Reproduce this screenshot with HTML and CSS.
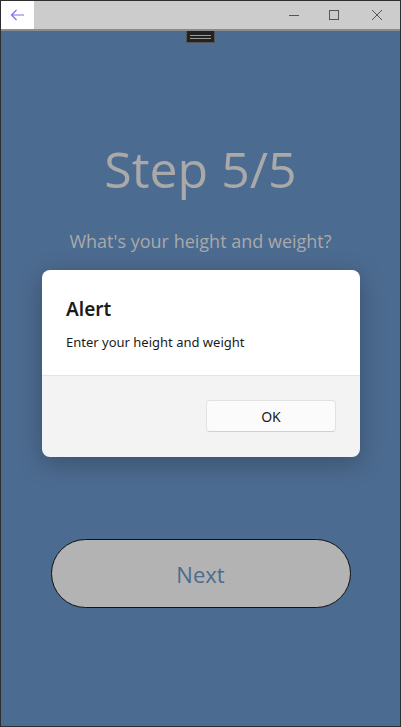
FILE: index.html
```html
<!DOCTYPE html>
<html>
<head>
<meta charset="utf-8">
<link rel="stylesheet" href="styles.css">
</head>
<body>
<div class="window">
  <div class="titlebar">
    <div class="back">
      <svg width="16" height="12" viewBox="0 0 16 12"><path d="M6.5 1 L1.5 6 L6.5 11 M1.5 6 H14" fill="none" stroke="#7b6cf0" stroke-width="1.2"/></svg>
    </div>
    <div class="spacer"></div>
    <div class="ctrl"><svg width="12" height="12" viewBox="0 0 12 12"><path d="M1 6.5 H11" stroke="#555" stroke-width="1"/></svg></div>
    <div class="ctrl"><svg width="12" height="12" viewBox="0 0 12 12"><rect x="1.5" y="1.5" width="9" height="9" fill="none" stroke="#555" stroke-width="1"/></svg></div>
    <div class="ctrl"><svg width="12" height="12" viewBox="0 0 12 12"><path d="M1 1 L11 11 M11 1 L1 11" stroke="#555" stroke-width="1"/></svg></div>
  </div>
  <div class="content">
    <div class="handle"><span></span><span></span></div>
    <h1 class="step">Step 5/5</h1>
    <p class="question">What's your height and weight?</p>
    <div class="grow"></div>
    <button class="next">Next</button>
    <div class="dialog">
      <div class="dialog-body">
        <h2 class="dialog-title">Alert</h2>
        <p class="dialog-text">Enter your height and weight</p>
      </div>
      <div class="dialog-footer">
        <button class="ok">OK</button>
      </div>
    </div>
  </div>
</div>
</body>
</html>
```
FILE: styles.css
```css
html, body {
  margin: 0;
  padding: 0;
  width: 401px;
  height: 727px;
  overflow: hidden;
}
.window {
  box-sizing: border-box;
  width: 401px;
  height: 727px;
  border: 1px solid #2e2e2e;
  display: flex;
  flex-direction: column;
  font-family: "Open Sans", sans-serif;
  background: #4c6b90;
}
.titlebar {
  height: 28px;
  flex: none;
  display: flex;
  background: #cccccc;
  border-bottom: 2px solid #8c8c8c;
}
.back {
  width: 33px;
  background: #ffffff;
  display: flex;
  align-items: center;
  justify-content: center;
}
.spacer { flex: 1; }
.ctrl {
  width: 40px;
  display: flex;
  align-items: center;
  justify-content: center;
}
.ctrl:last-child { width: 46px; }
.content {
  position: relative;
  flex: 1;
  display: flex;
  flex-direction: column;
  align-items: center;
}
.handle {
  width: 27px;
  height: 11px;
  background: #222222;
  border: 1px solid #555;
  border-top: none;
  display: flex;
  flex-direction: column;
  align-items: center;
  justify-content: center;
  gap: 2px;
}
.handle span {
  display: block;
  width: 21px;
  height: 1px;
  background: #9a9a9a;
}
.step {
  margin: 92px 0 0 0;
  font-size: 50px;
  font-weight: 400;
  color: #a9a9a9;
  line-height: 68px;
}
.question {
  margin: 26px 0 0 0;
  font-size: 18px;
  color: #a9a9a9;
  line-height: 24px;
}
.grow { flex: 1; }
.next {
  width: 300px;
  height: 69px;
  margin-bottom: 118px;
  border: 1px solid #111;
  border-radius: 35px;
  background: #b3b3b3;
  color: #4c6b90;
  font-family: "Open Sans", sans-serif;
  font-size: 22px;
}
.dialog {
  position: absolute;
  left: 41px;
  top: 239px;
  width: 318px;
  height: 187px;
  border-radius: 8px;
  overflow: hidden;
  box-shadow: 0 6px 24px rgba(0,0,0,0.25);
  display: flex;
  flex-direction: column;
  font-family: "Noto Sans", sans-serif;
}
.dialog-body {
  background: #ffffff;
  height: 106px;
  padding: 24px 24px 0 24px;
  box-sizing: border-box;
  border-bottom: 1px solid #e3e3e3;
}
.dialog-title {
  margin: 0;
  font-size: 19px;
  font-weight: 600;
  color: #1b1b1b;
  line-height: 30px;
}
.dialog-text {
  margin: 8px 0 0 0;
  font-size: 13px;
  color: #1b1b1b;
  line-height: 20px;
}
.dialog-footer {
  flex: 1;
  background: #f3f3f3;
  display: flex;
  justify-content: flex-end;
  align-items: flex-start;
  padding: 24px 24px 0 0;
}
.ok {
  width: 130px;
  height: 32px;
  background: #fbfbfb;
  border: 1px solid #e2e2e2;
  border-bottom-color: #cfcfcf;
  border-radius: 4px;
  font-family: "Noto Sans", sans-serif;
  font-size: 14px;
  color: #1b1b1b;
}
```
